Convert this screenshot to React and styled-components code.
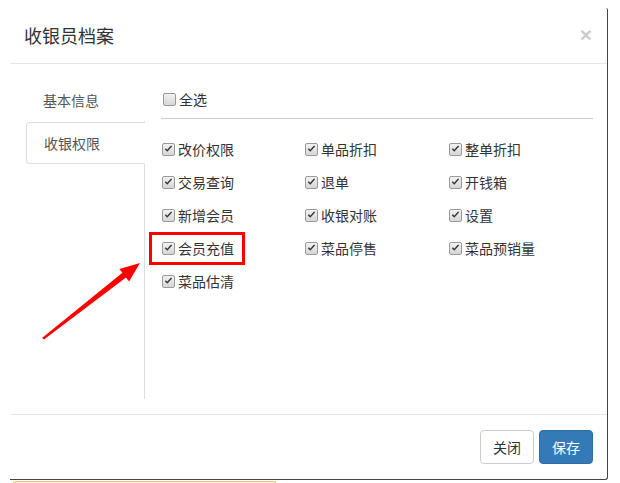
import React from "react";
import styled, { createGlobalStyle } from "styled-components";

const GlobalStyle = createGlobalStyle`
  html, body {
    margin: 0;
    padding: 0;
    background: #fff;
    overflow: hidden;
  }
  body {
    font-family: "Noto Sans CJK SC", "Liberation Sans", sans-serif;
    font-size: 14px;
    color: #333;
  }
`;

const Page = styled.div`
  position: relative;
  width: 620px;
  height: 483px;
  padding: 8px 0 0 10px;
  box-sizing: border-box;
  overflow: hidden;
`;

const Modal = styled.div`
  width: 598px;
  background: #fff;
  border-right: 1px solid #444;
  border-bottom: 1px solid #444;
  border-radius: 0 2px 3px 0;
  box-sizing: border-box;
`;

const Header = styled.div`
  display: flex;
  align-items: center;
  justify-content: space-between;
  height: 56px;
  padding: 0 15px 0 14px;
  box-sizing: border-box;
  border-bottom: 1px solid #e5e5e5;
`;

const Title = styled.h4`
  margin: 0;
  font-size: 18px;
  font-weight: normal;
  line-height: 25px;
  color: #333;
`;

const Close = styled.button`
  border: 0;
  background: transparent;
  padding: 0;
  margin-top: -3px;
  font-family: "Liberation Sans", sans-serif;
  font-size: 21px;
  font-weight: bold;
  line-height: 1;
  color: #000;
  opacity: 0.2;
  cursor: pointer;
`;

const Body = styled.div`
  padding: 15px 14px 15px 15px;
  display: flex;
  height: 320px;
`;

const NavList = styled.ul`
  list-style: none;
  margin: 0;
  padding: 0;
  width: 120px;
  flex-shrink: 0;
  border-right: 1px solid #ddd;
  box-sizing: border-box;
`;

const NavItem = styled.li`
  margin-right: -1px;
  & + & {
    margin-top: 1px;
  }
`;

const NavLink = styled.a`
  display: block;
  padding: 10px 17px;
  margin-left: ${(p) => (p.$active ? "1px" : "0")};
  line-height: 20px;
  color: #555;
  background: #fff;
  text-decoration: none;
  border: 1px solid ${(p) => (p.$active ? "#ddd" : "transparent")};
  border-right-color: transparent;
  border-radius: 4px 0 0 4px;
  cursor: pointer;
`;

const Pane = styled.div`
  flex: 1;
  padding-left: 16px;
`;

const SelectAll = styled.div`
  margin-top: 10px;
  padding: 0 2px 9px;
  border-bottom: 1px solid #ccc;
`;

const Grid = styled.div`
  display: grid;
  grid-template-columns: 143px 144px 143px;
  row-gap: 13px;
  padding: 20px 0 0 1px;
`;

const Item = styled.label`
  position: relative;
  display: flex;
  align-items: center;
  height: 20px;
  line-height: 20px;
  cursor: pointer;
`;

const Box = styled.span`
  display: inline-flex;
  align-items: center;
  justify-content: center;
  width: 13px;
  height: 13px;
  margin-right: 3px;
  box-sizing: border-box;
  border: 1px solid #9a9a9a;
  border-radius: 2px;
  background: linear-gradient(#f2f2f2, #d6d6d6);
  flex-shrink: 0;
`;

const Mark = styled.div`
  position: absolute;
  left: -13px;
  top: -6px;
  width: 96px;
  height: 33px;
  border: 3px solid #f00;
  box-sizing: border-box;
  pointer-events: none;
`;

const Footer = styled.div`
  display: flex;
  justify-content: flex-end;
  gap: 5px;
  padding: 15px 14px 15px 15px;
  border-top: 1px solid #e5e5e5;
`;

const Button = styled.button`
  height: 34px;
  padding: 6px 12px;
  font-family: inherit;
  font-size: 14px;
  line-height: 20px;
  border-radius: 4px;
  border: 1px solid ${(p) => (p.$primary ? "#2e6da4" : "#ccc")};
  background: ${(p) => (p.$primary ? "#337ab7" : "#fff")};
  color: ${(p) => (p.$primary ? "#fff" : "#333")};
  cursor: pointer;
`;

const Toast = styled.div`
  width: 263px;
  height: 6px;
  margin: 1px 0 0 2px;
  background: #fdf1d8;
  border: 1px solid #ebc17f;
  border-bottom: 0;
  border-radius: 4px 4px 0 0;
`;

const Arrow = styled.svg`
  position: absolute;
  left: 0;
  top: 0;
  pointer-events: none;
`;

const Check = ({ checked }) => (
  <Box>
    {checked && (
      <svg width="9" height="8" viewBox="0 0 9 8">
        <path d="M0.8 4.2 L3.3 6.8 L8.2 1.2 L7 0.4 L3.2 4.8 L1.9 3.3 Z" fill="#333" />
      </svg>
    )}
  </Box>
);

const perms = [
  "改价权限", "单品折扣", "整单折扣",
  "交易查询", "退单", "开钱箱",
  "新增会员", "收银对账", "设置",
  "会员充值", "菜品停售", "菜品预销量",
  "菜品估清",
];

export default function App() {
  return (
    <Page>
      <GlobalStyle />
      <Modal>
        <Header>
          <Title>收银员档案</Title>
          <Close>×</Close>
        </Header>
        <Body>
          <NavList>
            <NavItem><NavLink>基本信息</NavLink></NavItem>
            <NavItem><NavLink $active>收银权限</NavLink></NavItem>
          </NavList>
          <Pane>
            <SelectAll>
              <Item><Check />全选</Item>
            </SelectAll>
            <Grid>
              {perms.map((p) => (
                <Item key={p}>
                  {p === "会员充值" && <Mark />}
                  <Check checked />
                  {p}
                </Item>
              ))}
            </Grid>
          </Pane>
        </Body>
        <Footer>
          <Button>关闭</Button>
          <Button $primary>保存</Button>
        </Footer>
      </Modal>
      <Toast />
      <Arrow width="620" height="483" viewBox="0 0 620 483">
        <polygon
          points="42,338 122.4,272.8 119.3,268.9 140,263 129.1,281.5 126,277.6 44,339.5"
          fill="#f00"
        />
      </Arrow>
    </Page>
  );
}
